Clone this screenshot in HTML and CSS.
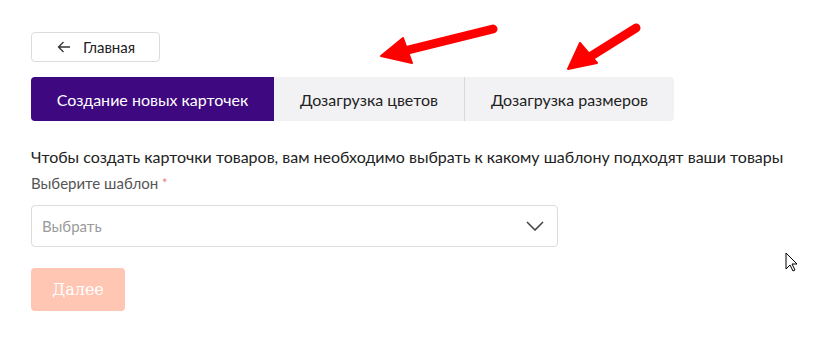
FILE: index.html
```html
<!DOCTYPE html>
<html lang="ru">
<head>
<meta charset="utf-8">
<link rel="stylesheet" href="styles.css">
</head>
<body>
<div class="page">
  <button class="back"><svg class="back-icon" width="14" height="12" viewBox="0 0 14 12"><path d="M13 6H1.5M6.5 1L1.5 6l5 5" fill="none" stroke="#333" stroke-width="1.3"/></svg><span>Главная</span></button>
  <div class="tabs">
    <div class="tab active">Создание новых карточек</div>
    <div class="tab t2">Дозагрузка цветов</div>
    <div class="tab t3">Дозагрузка размеров</div>
  </div>
  <p class="intro">Чтобы создать карточки товаров, вам необходимо выбрать к какому шаблону подходят ваши товары</p>
  <div class="label">Выберите шаблон <span class="req">*</span></div>
  <div class="select"><span class="ph">Выбрать</span><svg width="18" height="10" viewBox="0 0 18 10"><path d="M1 1l8 8 8-8" fill="none" stroke="#444" stroke-width="1.6"/></svg></div>
  <button class="next">Далее</button>

  <svg class="arrows" width="819" height="100" viewBox="0 0 819 100">
    <g fill="#f00" stroke="#f00" stroke-linecap="round" stroke-linejoin="round">
      <line x1="493" y1="29" x2="400" y2="52" stroke-width="9"/>
      <polygon points="381,56 403,38 412,63" stroke-width="2"/>
      <line x1="636" y1="28" x2="588" y2="58" stroke-width="9"/>
      <polygon points="568,69 580,43 597,63" stroke-width="2"/>
    </g>
  </svg>
  <svg class="cursor" width="14" height="22" viewBox="0 0 14 22"><path d="M1 1v16l4-4 3 6 2-1-3-6h5z" fill="#fff" stroke="#000" stroke-width="1"/></svg>
</div>
</body>
</html>
```
FILE: styles.css
```css
* { box-sizing: border-box; }
html, body { margin: 0; padding: 0; background: #fff; }
body { font-family: Lato, "Noto Sans", sans-serif; color: #222; }
.page { position: relative; width: 819px; height: 358px; padding: 32px 31px 0; display: flex; flex-direction: column; align-items: flex-start; }
.back { height: 30px; width: 129px; border: 1px solid #dcdcdc; border-radius: 4px; background: #fff; display: flex; align-items: center; padding: 0 0 0 25px; gap: 12px; font-family: Lato, sans-serif; font-size: 15px; color: #222; }
.back span { line-height: 1; }
.tabs { margin-top: 15px; display: flex; height: 44px; border-radius: 4px; overflow: hidden; background: #f2f2f5; }
.tab { display: flex; align-items: center; justify-content: center; font-size: 16px; color: #222; }
.tab.active { width: 243px; background: #3d0880; color: #fff; }
.t2 { width: 191px; border-right: 1px solid #d8d8dc; }
.t3 { width: 209px; }
.intro { margin: 24px 0 0; font-size: 16px; line-height: 24px; color: #222; }
.label { margin-top: 4px; font-size: 15px; line-height: 20px; color: #555; }
.req { color: #e98080; font-size: 13px; vertical-align: top; }
.select { margin-top: 12px; width: 527px; height: 42px; border: 1px solid #dcdcdc; border-radius: 4px; display: flex; align-items: center; justify-content: space-between; padding: 0 13px 0 10px; }
.ph { font-size: 15px; color: #9a9a9a; }
.next { margin-top: 21px; width: 94px; height: 43px; border: 0; border-radius: 4px; background: #ffc6b3; color: #fff; font-family: "DejaVu Serif", serif; font-weight: normal; font-size: 16px; }
.arrows { position: absolute; left: 0; top: 0; }
.cursor { position: absolute; left: 785px; top: 252px; }
```
